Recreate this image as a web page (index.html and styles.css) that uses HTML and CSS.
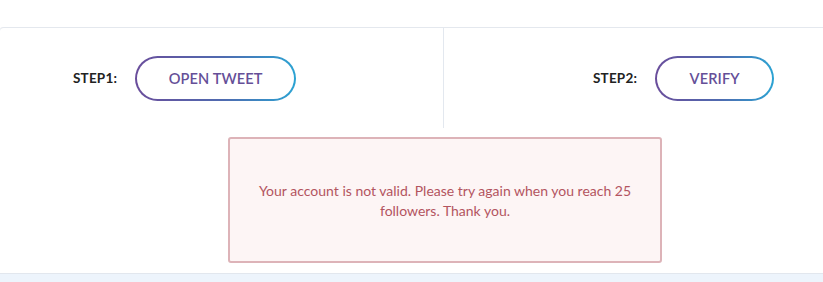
FILE: index.html
```html
<!DOCTYPE html>
<html>
<head>
<meta charset="utf-8">
<link rel="stylesheet" href="styles.css">
</head>
<body>
<div class="top"></div>
<div class="card">
  <div class="steps">
    <div class="step step-left">
      <span class="label">STEP1:</span>
      <a class="btn btn-open">OPEN TWEET</a>
    </div>
    <div class="step step-right">
      <span class="label">STEP2:</span>
      <a class="btn btn-verify">VERIFY</a>
    </div>
  </div>
  <div class="alert">Your account is not valid. Please try again when you reach 25<br>followers. Thank you.</div>
</div>
<div class="bottom"></div>
</body>
</html>
```
FILE: styles.css
```css
html, body {
  margin: 0;
  padding: 0;
  overflow: hidden;
  background: #ffffff;
  font-family: Lato, "Open Sans", sans-serif;
}
.top {
  height: 27px;
  background: #ffffff;
}
.card {
  box-sizing: border-box;
  border-top: 1px solid #e4e8ee;
  border-radius: 4px 0 0 0;
  box-shadow: -1px 0 0 #f3f4f6;
  background: #ffffff;
  padding-bottom: 10px;
  border-bottom: 1px solid #e2e7ee;
}
.steps {
  display: flex;
  height: 100px;
}
.step {
  display: flex;
  align-items: center;
  box-sizing: border-box;
}
.step-left {
  width: 444px;
  padding-left: 73px;
  border-right: 1px solid #e3e8ef;
}
.step-right {
  padding-left: 149px;
}
.label {
  font-size: 13.5px;
  font-weight: 700;
  color: #222222;
  margin-right: 18px;
  letter-spacing: 0.2px;
}
.btn {
  display: flex;
  align-items: center;
  justify-content: center;
  height: 45px;
  box-sizing: border-box;
  border: 2px solid transparent;
  border-radius: 23px;
  background:
    linear-gradient(#ffffff, #ffffff) padding-box,
    linear-gradient(90deg, #6a4d9b 0%, #4f6bb0 55%, #2ba3d3 100%) border-box;
  color: #654f98;
  font-size: 14.6px;
  font-weight: 600;
  letter-spacing: 0.1px;
}
.btn-open { width: 161px; }
.btn-verify { width: 119px; }
.alert {
  margin: 9px 0 0 228px;
  width: 434px;
  height: 126px;
  box-sizing: border-box;
  border: 2px solid #ddb3b8;
  border-radius: 3px;
  background: #fdf5f5;
  color: #b3545f;
  font-size: 14px;
  line-height: 20px;
  text-align: center;
  display: flex;
  align-items: center;
  justify-content: center;
  padding-top: 2px;
}
.bottom {
  height: 20px;
  background: #edf4fc;
}
```
